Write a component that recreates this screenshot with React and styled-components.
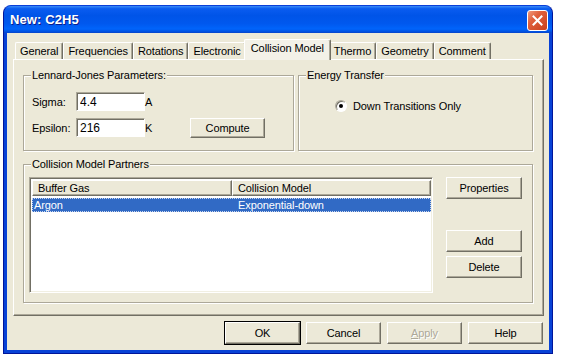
import styled, { createGlobalStyle } from "styled-components";

const GlobalStyle = createGlobalStyle`
  body {
    margin: 0;
    background: #fff;
    font-family: "Liberation Sans", Arial, sans-serif;
    font-size: 11px;
    letter-spacing: -0.1px;
    color: #000;
  }
`;

const tabs = [
  "General",
  "Frequencies",
  "Rotations",
  "Electronic",
  "Collision Model",
  "Thermo",
  "Geometry",
  "Comment",
];

export default function App() {
  return (
    <>
      <GlobalStyle />
      <Window>
        <TitleBar>
          <Title>New: C2H5</Title>
          <CloseButton>
            <svg width="11" height="11" viewBox="0 0 11 11">
              <path d="M1.5 1.5 L9.5 9.5 M9.5 1.5 L1.5 9.5" stroke="#fff" strokeWidth="2" strokeLinecap="square" />
            </svg>
          </CloseButton>
        </TitleBar>

        <Body>
          <TabStrip>
            {tabs.map((t) => (
              <Tab key={t} $active={t === "Collision Model"}>
                {t}
              </Tab>
            ))}
          </TabStrip>

          <Panel>
            <Group>
              <Legend>Lennard-Jones Parameters:</Legend>
              <ParamGrid>
                <span>Sigma:</span>
                <TextBox defaultValue="4.4" />
                <span>A</span>
                <span />
                <span>Epsilon:</span>
                <TextBox defaultValue="216" />
                <span>K</span>
                <Button $w={75} $h={20}>Compute</Button>
              </ParamGrid>
            </Group>

            <Group>
              <Legend>Energy Transfer</Legend>
              <RadioRow>
                <Radio />
                Down Transitions Only
              </RadioRow>
            </Group>

            <Group $wide>
              <Legend>Collision Model Partners</Legend>
              <PartnersBody>
                <ListView>
                  <HeaderRow>
                    <HeaderCell>Buffer Gas</HeaderCell>
                    <HeaderCell>Collision Model</HeaderCell>
                  </HeaderRow>
                  <Row $selected>
                    <Cell>Argon</Cell>
                    <Cell>Exponential-down</Cell>
                  </Row>
                </ListView>
                <SideButtons>
                  <Button $w={76} $h={22}>Properties</Button>
                  <Button $w={76} $h={22} style={{ marginTop: 27 }}>Add</Button>
                  <Button $w={76} $h={22}>Delete</Button>
                </SideButtons>
              </PartnersBody>
            </Group>
          </Panel>

          <ButtonRow>
            <Button $w={75} $h={22} $default>OK</Button>
            <Button $w={75} $h={22}>Cancel</Button>
            <Button $w={75} $h={22} $disabled>
              <u>A</u>pply
            </Button>
            <Button $w={75} $h={22}>Help</Button>
          </ButtonRow>
        </Body>
      </Window>
    </>
  );
}

const Window = styled.div`
  width: 550px;
  box-sizing: border-box;
  margin: 5px 0 0 3px;
  background: #0842d6;
  border: 1px solid #00159a;
  border-top-color: #0a3fd8;
  border-radius: 8px 8px 0 0;
  overflow: hidden;
  padding-bottom: 3px;
`;

const TitleBar = styled.div`
  height: 27px;
  display: flex;
  align-items: center;
  justify-content: space-between;
  padding: 0 4px 0 6px;
  background: linear-gradient(
    to bottom,
    #3c8cf7 0%,
    #0a5cf0 10%,
    #0054e8 35%,
    #0058ee 65%,
    #0064fb 85%,
    #0051e0 95%,
    #0843c8 100%
  );
`;

const Title = styled.div`
  color: #fff;
  font-weight: bold;
  font-size: 13px;
  text-shadow: 1px 1px 0 #0a1e8c;
  letter-spacing: 0.1px;
`;

const CloseButton = styled.div`
  width: 21px;
  height: 21px;
  box-sizing: border-box;
  border: 1px solid #fff;
  border-radius: 3px;
  background: linear-gradient(135deg, #f09a7c 0%, #e0603c 35%, #c8401c 100%);
  display: flex;
  align-items: center;
  justify-content: center;
  margin-top: 1px;
`;

const Body = styled.div`
  margin: 0 3px;
  background: #ece9d8;
  padding: 7px 5px 6px 6px;
`;

const TabStrip = styled.div`
  display: flex;
  align-items: flex-end;
  height: 20px;
  padding-left: 2px;
  margin-bottom: -1px;
`;

const Tab = styled.div`
  position: relative;
  height: ${(p) => (p.$active ? 20 : 16)}px;
  line-height: ${(p) => (p.$active ? 17 : 16)}px;
  margin: 0 ${(p) => (p.$active ? -2 : 0)}px ${(p) => (p.$active ? 0 : 1)}px;
  padding: 0 ${(p) => (p.$active ? 6 : 4)}px;
  background: ${(p) => (p.$active ? "#f3f1e8" : "#ece9d8")};
  border-top: 1px solid #fff;
  border-left: 1px solid #fff;
  border-right: 1px solid #716f64;
  box-shadow: inset -1px 0 0 #aca899;
  border-radius: 2px 2px 0 0;
  white-space: nowrap;
  z-index: ${(p) => (p.$active ? 2 : 0)};
`;

const Panel = styled.div`
  height: 257px;
  box-sizing: border-box;
  border: 1px solid;
  border-color: #fff #716f64 #716f64 #fff;
  box-shadow: inset -1px -1px 0 #aca899;
  padding: 9px 11px 12px 9px;
  display: grid;
  grid-template-columns: 271px 235px;
  grid-template-rows: 82px 145px;
  column-gap: 4px;
  row-gap: 7px;
`;

const Group = styled.fieldset`
  margin: 0;
  padding: 0;
  min-width: 0;
  box-sizing: border-box;
  border: 1px solid #aca899;
  box-shadow: 1px 1px 0 #fff, inset 1px 1px 0 #fff;
  grid-column: ${(p) => (p.$wide ? "1 / span 2" : "auto")};
`;

const Legend = styled.legend`
  margin-left: 7px;
  padding: 0 1px;
  line-height: 13px;
  background: #ece9d8;
`;

const ParamGrid = styled.div`
  display: grid;
  grid-template-columns: 44px 69px 45px 75px;
  grid-template-rows: 19px 19px;
  row-gap: 7px;
  align-items: center;
  padding: 10px 0 0 8px;
`;

const TextBox = styled.input`
  width: 69px;
  height: 19px;
  box-sizing: border-box;
  border: 1px solid;
  border-color: #aca899 #fff #fff #aca899;
  box-shadow: inset 1px 1px 0 #716f64;
  background: #fff;
  padding: 0 3px;
  font: inherit;
  font-size: 12px;
  outline: none;
`;

const Button = styled.div`
  width: ${(p) => p.$w}px;
  height: ${(p) => p.$h}px;
  box-sizing: border-box;
  display: flex;
  align-items: center;
  justify-content: center;
  background: #ece9d8;
  border: 1px solid;
  border-color: #fff #716f64 #716f64 #fff;
  box-shadow: inset -1px -1px 0 #aca899
    ${(p) => (p.$default ? ", 0 0 0 1px #000" : "")};
  color: ${(p) => (p.$disabled ? "#aca899" : "#000")};
  text-shadow: ${(p) => (p.$disabled ? "1px 1px 0 #fff" : "none")};
  font-size: 11px;
  white-space: nowrap;
`;

const RadioRow = styled.div`
  display: flex;
  align-items: center;
  gap: 6px;
  padding: 18px 0 0 36px;
`;

const Radio = styled.span`
  position: relative;
  width: 12px;
  height: 12px;
  box-sizing: border-box;
  border-radius: 50%;
  border: 1px solid;
  border-color: #aca899 #fff #fff #aca899;
  box-shadow: inset 1px 1px 0 #716f64;
  background: #fff;

  &::after {
    content: "";
    position: absolute;
    left: 3px;
    top: 3px;
    width: 4px;
    height: 4px;
    border-radius: 50%;
    background: #000;
  }
`;

const PartnersBody = styled.div`
  display: flex;
  gap: 13px;
  padding: 6px 0 0 5px;
`;

const ListView = styled.div`
  width: 404px;
  height: 116px;
  box-sizing: border-box;
  background: #fff;
  border: 1px solid;
  border-color: #aca899 #fff #fff #aca899;
  box-shadow: inset 1px 1px 0 #716f64, inset -1px -1px 0 #f1efe2;
  padding: 2px 1px 1px 2px;
`;

const HeaderRow = styled.div`
  display: grid;
  grid-template-columns: 200px 1fr;
  height: 16px;
`;

const HeaderCell = styled.div`
  background: #ece9d8;
  border: 1px solid;
  border-color: #fff #716f64 #716f64 #fff;
  box-shadow: inset -1px -1px 0 #aca899;
  padding-left: 5px;
  line-height: 14px;
  box-sizing: border-box;
`;

const Row = styled.div`
  display: grid;
  grid-template-columns: 200px 1fr;
  height: 14px;
  line-height: 14px;
  margin-top: 2px;
  background: ${(p) => (p.$selected ? "#316ac5" : "transparent")};
  color: ${(p) => (p.$selected ? "#fff" : "#000")};
  outline: ${(p) => (p.$selected ? "1px dotted #c9d6ee" : "none")};
  outline-offset: -1px;
`;

const Cell = styled.div`
  padding-left: 6px;
  white-space: nowrap;

  &:first-child {
    padding-left: 2px;
  }
`;

const SideButtons = styled.div`
  display: flex;
  flex-direction: column;
  gap: 4px;
`;

const ButtonRow = styled.div`
  display: flex;
  justify-content: flex-end;
  gap: 6px;
  margin-top: 6px;
  padding-right: 1px;
`;
